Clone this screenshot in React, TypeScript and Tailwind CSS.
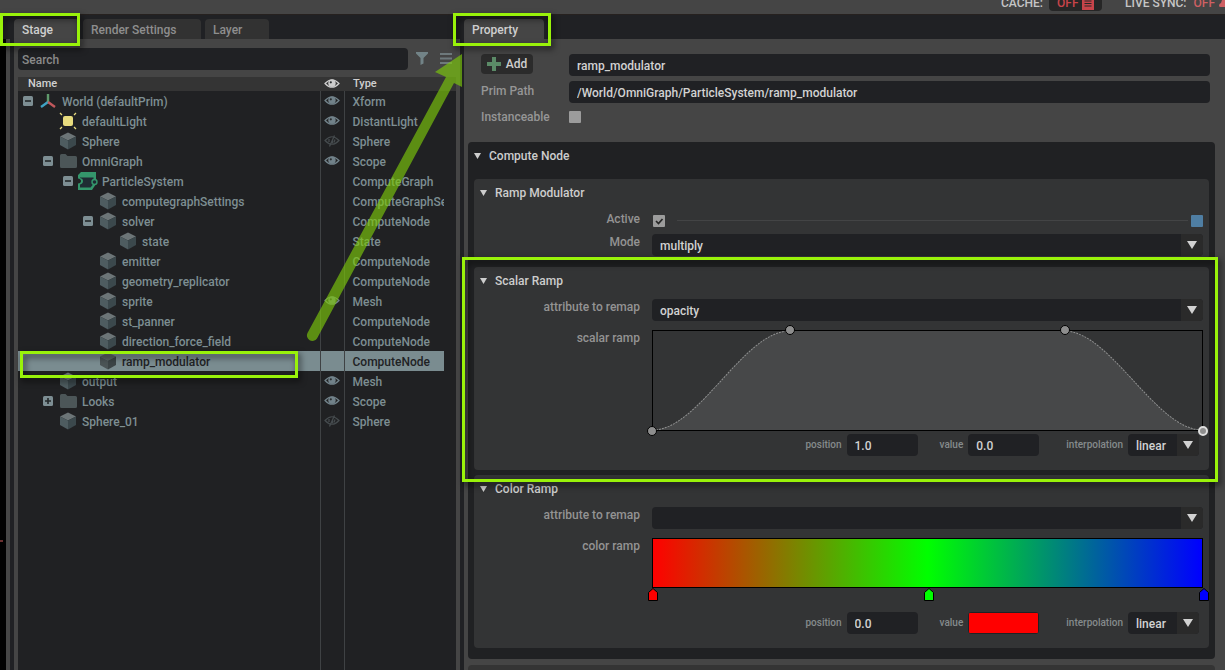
import React from 'react';

type IconKind = 'axes' | 'light' | 'cube' | 'folder' | 'graph';

interface Prim {
  name: string;
  type: string;
  depth: number;
  icon: IconKind;
  toggle?: 'open' | 'closed';
  eye?: 'on' | 'off';
  selected?: boolean;
}

const prims: Prim[] = [
  { name: 'World (defaultPrim)', type: 'Xform', depth: 0, icon: 'axes', toggle: 'open', eye: 'on' },
  { name: 'defaultLight', type: 'DistantLight', depth: 1, icon: 'light', eye: 'on' },
  { name: 'Sphere', type: 'Sphere', depth: 1, icon: 'cube', eye: 'off' },
  { name: 'OmniGraph', type: 'Scope', depth: 1, icon: 'folder', toggle: 'open', eye: 'on' },
  { name: 'ParticleSystem', type: 'ComputeGraph', depth: 2, icon: 'graph', toggle: 'open' },
  { name: 'computegraphSettings', type: 'ComputeGraphSettings', depth: 3, icon: 'cube' },
  { name: 'solver', type: 'ComputeNode', depth: 3, icon: 'cube', toggle: 'open' },
  { name: 'state', type: 'State', depth: 4, icon: 'cube' },
  { name: 'emitter', type: 'ComputeNode', depth: 3, icon: 'cube' },
  { name: 'geometry_replicator', type: 'ComputeNode', depth: 3, icon: 'cube' },
  { name: 'sprite', type: 'Mesh', depth: 3, icon: 'cube', eye: 'on' },
  { name: 'st_panner', type: 'ComputeNode', depth: 3, icon: 'cube' },
  { name: 'direction_force_field', type: 'ComputeNode', depth: 3, icon: 'cube' },
  { name: 'ramp_modulator', type: 'ComputeNode', depth: 3, icon: 'cube', selected: true },
  { name: 'output', type: 'Mesh', depth: 1, icon: 'cube', eye: 'on' },
  { name: 'Looks', type: 'Scope', depth: 1, icon: 'folder', toggle: 'closed', eye: 'on' },
  { name: 'Sphere_01', type: 'Sphere', depth: 1, icon: 'cube', eye: 'off' },
];

const PrimIcon = ({ kind, dim }: { kind: IconKind; dim?: boolean }) => {
  switch (kind) {
    case 'axes':
      return (
        <svg viewBox="0 0 18 18" className="w-[18px] h-[18px]" fill="none" strokeWidth="2.4">
          <path d="M9 10V2" stroke="#5f9a6b" />
          <path d="M9 10l-7 5" stroke="#3fa3c4" />
          <path d="M9 10l7 5" stroke="#c0585c" />
        </svg>
      );
    case 'light':
      return (
        <svg viewBox="0 0 18 18" className="w-[18px] h-[18px]">
          <rect x="4" y="4" width="10" height="10" rx="2" fill="#e8dc7e" />
          <path d="M1 1l2 2M17 1l-2 2M1 17l2-2M17 17l-2-2" stroke="#e8dc7e" strokeWidth="1.3" />
        </svg>
      );
    case 'folder':
      return (
        <svg viewBox="0 0 18 18" className="w-[18px] h-[18px]">
          <path d="M1 3.5Q1 2 2.500 2h4l2 2h8q1.500 0 1.500 1.500v9q0 1.500-1.500 1.500h-14Q1 16 1 14.500z" fill="#4c5658" />
        </svg>
      );
    case 'graph':
      return (
        <svg viewBox="0 0 20 18" className="-ml-px w-5 h-[18px]">
          <path d="M3 0H18V12L14 18H0V11.500Q3 11 3 9Q3 7 0 6.500V3z" fill="#34966b" />
          <path d="M2 5.500H15.500V12L12.500 15.500H2V12.500Q5 11.500 5 9Q5 6.500 2 6z" fill="#1f2b33" />
          <circle cx="16.500" cy="10" r="2.500" fill="#1f2b33" stroke="#34966b" strokeWidth="1.400" />
        </svg>
      );
    default:
      return (
        <svg viewBox="0 0 18 18" className="w-[18px] h-[18px]">
          <path d="M9 0.500L17 4.500L9 8.500L1 4.500z" fill={dim ? '#5b6364' : '#6c7577'} />
          <path d="M1 4.500L9 8.500V17.500L1 13z" fill={dim ? '#4b5456' : '#4e5c60'} />
          <path d="M17 4.500L9 8.500V17.500L17 13z" fill={dim ? '#3c4446' : '#3b484c'} />
        </svg>
      );
  }
};

const Eye = ({ off, bright }: { off?: boolean; bright?: boolean }) => {
  const color = bright ? '#cdcdcd' : off ? '#454b4e' : '#71828a';
  return (
    <svg viewBox="0 0 16 12" className="w-4 h-3 mx-auto" fill="none" stroke={color}>
      <path d="M1 5.500Q8-2 15 5.500Q8 13 1 5.500z" strokeWidth="1.200" />
      {off ? (
        <path d="M10.500 0.500L5.500 11.500M8.500 4.500v4M5 4v3M11 4.500l-1 3" strokeWidth="1.300" />
      ) : (
        <>
          <circle cx="8" cy="5.300" r="3.700" fill={color} stroke="none" />
          <circle cx="6.800" cy="4.300" r="1.100" fill="#2a2e30" stroke="none" />
        </>
      )}
    </svg>
  );
};

const Toggle = ({ state }: { state: 'open' | 'closed' }) => (
  <button aria-label={state === 'open' ? 'Collapse' : 'Expand'} className="block w-[10px] h-[10px]">
    <svg viewBox="0 0 10 10" className="block w-[10px] h-[10px]">
      <rect width="10" height="10" rx="1.500" fill="#7d8e93" />
      <path d={state === 'open' ? 'M2 5h6' : 'M2 5h6M5 2v6'} stroke="#23282a" strokeWidth="1.600" />
    </svg>
  </button>
);

// Green frame used to call out a part of the interface
const Callout = ({ className }: { className: string }) => (
  <div
    aria-hidden
    className={`absolute z-10 pointer-events-none border-3 border-[#99f20a] drop-shadow-[2px_3px_3px_rgba(0,0,0,0.7)] ${className}`}
  />
);

const Tab = ({ label, active, className }: { label: string; active?: boolean; className: string }) => (
  <button
    role="tab"
    aria-selected={!!active}
    className={`h-5 pl-2 pt-0.5 text-left rounded-t ${active ? 'bg-[#454545] text-[#cfcfcf]' : 'bg-[#323232] text-[#8e8e8e]'} ${className}`}
  >
    {label}
  </button>
);

const TopBar = () => (
  <header className="h-[14px] shrink-0 bg-[#454545] overflow-hidden flex justify-end items-end pb-[3px] text-[#c6c6c6]">
    <span className="leading-4">CACHE:</span>
    <button className="ml-1.5 h-4 w-[53px] px-2 rounded-b-sm bg-[#262626] text-[#c8444a] flex items-center justify-between">
      OFF
      <svg viewBox="0 0 12 12" className="w-3 h-4">
        <path d="M0 0h8l4 3v10H0z" fill="#c8444a" />
        <path d="M2.500 4h7M2.500 6.500h7M2.500 9h7" stroke="#262626" />
      </svg>
    </button>
    <span className="ml-[23px] leading-4">LIVE SYNC:</span>
    <button className="ml-[7px] -mr-1.5 h-4 text-[#cf6063] flex items-center gap-1">
      OFF
      <svg viewBox="0 0 12 12" className="w-3 h-3">
        <path d="M4 0h8v10H1.500Q0 10 0 8.500Q0 6.500 2 6z" fill="#cf6063" />
      </svg>
    </button>
  </header>
);

const StagePanel = () => (
  <section className="w-[446px] shrink-0 flex flex-col">
    <div role="tablist" className="relative h-6 shrink-0 flex items-end gap-1">
      <Tab label="Stage" active className="w-[65px]" />
      <Tab label="Render Settings" className="w-[118px]" />
      <Tab label="Layer" className="w-16" />
      <Callout className="-left-[14px] -top-0.5 w-20 h-[33px]" />
    </div>
    <div className="flex-1 bg-[#454545] px-1 pt-[9px] flex flex-col">
      <div className="flex items-start">
        <input
          type="text"
          placeholder="Search"
          aria-label="Search"
          className="flex-1 h-[22px] px-1 pt-0.5 rounded-sm bg-[#202124] placeholder:text-[#8a8a8a] text-[#cfcfcf] outline-none"
        />
        <button aria-label="Filter" className="ml-2 mt-1">
          <svg viewBox="0 0 12 13" className="block w-3 h-[13px]">
            <path d="M0 0h12v1.500L7.500 6v5.500L4.500 13V6L0 1.500z" fill="#728387" />
          </svg>
        </button>
        <button aria-label="Options" className="ml-3 mr-1 mt-1">
          <svg viewBox="0 0 12 13" className="block w-3 h-[13px]">
            <path d="M0 2h12M0 6.500h12M0 11h12" stroke="#6e797c" strokeWidth="2" />
          </svg>
        </button>
      </div>
      <div className="mt-[7px] flex-1 flex flex-col bg-[#202123]">
        <table className="w-full table-fixed border-collapse">
          <colgroup>
            <col />
            <col className="w-6" />
            <col className="w-[100px]" />
            <col className="w-3" />
          </colgroup>
          <thead className="bg-[#343434] text-[11px] text-[#d0d0d0]">
            <tr className="h-[14px] leading-[14px]">
              <th className="pl-[10px] text-left font-medium">Name</th>
              <th aria-label="Visibility"><Eye bright /></th>
              <th className="pl-[9px] text-left font-medium">Type</th>
              <th />
            </tr>
          </thead>
          <tbody>
            {prims.map((prim) => (
              <tr key={prim.name} className="h-5">
                <td className={`relative p-0 ${prim.selected ? 'bg-[#7a8c90] text-[#1f2224]' : 'text-[#7d8e92]'}`}>
                  <div className="flex items-center" style={{ paddingLeft: 5 + prim.depth * 20 }}>
                    <span className="w-[10px]">{prim.toggle && <Toggle state={prim.toggle} />}</span>
                    <span className="ml-1.5 w-[23px]"><PrimIcon kind={prim.icon} dim={prim.selected} /></span>
                    <span className="pt-0.5 leading-[18px]">{prim.name}</span>
                  </div>
                  {prim.selected && <Callout className="left-0.5 top-0 w-[278px] h-[27px]" />}
                </td>
                <td className={`p-0 border-x border-[#3f4244] ${prim.selected ? 'bg-[#7a8c90]' : ''}`}>
                  {prim.eye && <Eye off={prim.eye === 'off'} />}
                </td>
                <td
                  className={`p-0 pl-2 pt-0.5 leading-[18px] overflow-hidden whitespace-nowrap ${
                    prim.selected ? 'bg-[#7a8c90] text-[#1f2224]' : 'text-[#7d8e92]'
                  }`}
                >
                  {prim.type}
                </td>
                <td />
              </tr>
            ))}
          </tbody>
        </table>
        {/* Column rules run on below the last prim */}
        <div className="flex-1 flex justify-end">
          <div className="w-[25px] mr-[111px] border-x border-[#3f4244]" />
        </div>
      </div>
    </div>
  </section>
);

const Triangle = ({ className }: { className: string }) => (
  <svg viewBox="0 0 10 8" preserveAspectRatio="none" className={className}>
    <path d="M0 0h10L5 8z" fill="currentColor" />
  </svg>
);

const Dropdown = ({ id, options, className }: { id: string; options: string[]; className: string }) => (
  <div className={`relative h-[22px] ${className}`}>
    <select id={id} className="block w-full h-full pl-2 pr-6 pt-0.5 rounded-sm appearance-none bg-[#202124] text-[#d2d2d2] outline-none">
      {options.map((option) => (
        <option key={option}>{option}</option>
      ))}
    </select>
    <span className="absolute right-0 top-0 w-[22px] h-full rounded-r-sm bg-[#2a2a2a] text-[#d2d2d2] flex items-center justify-center pointer-events-none">
      <Triangle className="w-[10px] h-2" />
    </span>
  </div>
);

const Row = ({ label, id, children }: { label: string; id?: string; children: React.ReactNode }) => (
  <div className="flex items-start">
    <label htmlFor={id} className="w-[166px] shrink-0 mr-3 leading-4 text-right text-[#939393]">
      {label}
    </label>
    <div className="flex-1 min-w-0">{children}</div>
  </div>
);

const Card = ({ title, className, children }: { title: string; className: string; children: React.ReactNode }) => (
  <section className={`relative rounded-sm bg-[#333435] pr-1.5 ${className}`}>
    <h3 className="h-7 pl-1.5 flex items-center gap-2 text-[#cdcdcd]">
      <Triangle className="w-[7px] h-1.5" />
      {title}
    </h3>
    {children}
  </section>
);

const KeyEditor = ({ prefix, position, children }: { prefix: string; position: string; children: React.ReactNode }) => (
  <div className="flex items-center justify-end pr-1 text-[10px] text-[#858b8c]">
    <label htmlFor={`${prefix}-position`}>position</label>
    <input
      id={`${prefix}-position`}
      defaultValue={position}
      className="ml-[5px] w-[71px] h-[22px] px-2 pt-0.5 rounded-sm bg-[#202124] text-xs text-[#d2d2d2] outline-none"
    />
    <label htmlFor={`${prefix}-value`} className="ml-[22px]">value</label>
    {children}
    <label htmlFor={`${prefix}-interp`} className="ml-[27px]">interpolation</label>
    <Dropdown id={`${prefix}-interp`} options={['linear']} className="ml-[5px] w-[71px] text-xs" />
  </div>
);

const curveKeys = [
  { x: 0, y: 100 },
  { x: 25, y: 0 },
  { x: 75, y: 0 },
  { x: 100, y: 100, active: true },
];

const ScalarCurve = () => (
  <div className="relative h-[101px]">
    <svg viewBox="0 0 551 100" preserveAspectRatio="none" className="block w-full h-full border border-black">
      <path d="M0 100C46 100 91 0 137 0H413C459 0 505 100 551 100z" fill="#474849" />
      <path
        d="M0 100C46 100 91 0 137 0M413 0C459 0 505 100 551 100"
        fill="none"
        stroke="#8f9090"
        strokeDasharray="2 1"
        vectorEffect="non-scaling-stroke"
      />
    </svg>
    {curveKeys.map((key) => (
      <span
        key={key.x}
        className={`absolute w-[10px] h-[10px] -ml-[5px] -mt-[5px] rounded-full bg-[#8e8e8e] ${
          key.active ? 'border-2 border-[#dedede]' : 'border border-black'
        }`}
        style={{ left: `${key.x}%`, top: `${key.y}%` }}
      />
    ))}
  </div>
);

const colorKeys = [
  { at: 0, color: '#ff0000' },
  { at: 50, color: '#00ff00' },
  { at: 100, color: '#0000ff' },
];

const ColorGradient = () => (
  <div>
    <div className="h-[50px] border border-black bg-[linear-gradient(to_right,#ff0000,#00ff00,#0000ff)]" />
    <div className="relative h-6">
      {colorKeys.map((key) => (
        <svg
          key={key.at}
          viewBox="0 0 10 13"
          className="absolute top-0 w-[10px] h-[13px] -ml-1"
          style={{ left: `${key.at}%` }}
        >
          <path d="M.5 4.500L5 .5L9.500 4.500V12.500H.5z" fill={key.color} stroke="#000" />
        </svg>
      ))}
    </div>
  </div>
);

const PropertyPanel = () => (
  <section className="flex-1 min-w-0 flex flex-col">
    <div role="tablist" className="relative h-6 shrink-0 flex items-end">
      <Tab label="Property" active className="w-20" />
      <Callout className="-left-[11px] -top-0.5 w-[98px] h-[33px]" />
    </div>
    <div className="flex-1 bg-[#454545] pt-[15px]">
      <div className="pl-[17px] pr-[15px] text-[#969696]">
        <div className="flex items-start">
          <div className="w-22 shrink-0">
            <button className="w-[52px] h-5 rounded-sm bg-[#2b2b2b] text-[#cfcfcf] flex items-center justify-center gap-[5px]">
              <svg viewBox="0 0 14 14" className="w-[14px] h-[14px]">
                <path d="M5 0h4v5h5v4H9v5H5V9H0V5h5z" fill="#5b8a67" />
              </svg>
              Add
            </button>
          </div>
          <input
            aria-label="Prim name"
            defaultValue="ramp_modulator"
            className="flex-1 h-[22px] px-2 pt-0.5 rounded-sm bg-[#202124] text-[#d2d2d2] outline-none"
          />
        </div>
        <div className="mt-[5px] flex items-start">
          <label htmlFor="prim-path" className="w-22 shrink-0 leading-5">Prim Path</label>
          <input
            id="prim-path"
            defaultValue="/World/OmniGraph/ParticleSystem/ramp_modulator"
            className="flex-1 h-[22px] px-2 pt-0.5 rounded-sm bg-[#202124] text-[#d2d2d2] outline-none"
          />
        </div>
        <div className="mt-1 flex items-center">
          <label htmlFor="instanceable" className="w-22 shrink-0 leading-5">Instanceable</label>
          <input id="instanceable" type="checkbox" className="w-3 h-3 rounded-[1px] appearance-none bg-[#9c9c9c]" />
        </div>
      </div>

      <section className="mt-[15px] ml-1 mr-[10px] px-1.5 pb-[11px] rounded-sm bg-[#202123]">
        <h2 className="h-[37px] pb-[9px] flex items-center gap-2 text-[#cdcdcd]">
          <Triangle className="w-[7px] h-1.5" />
          Compute Node
        </h2>

        <Card title="Ramp Modulator" className="pb-[3px]">
          <div className="pt-1">
            <Row label="Active" id="active">
              <div className="h-[23px] flex items-center pb-1">
                <span className="relative ml-px w-3 h-3">
                  <input id="active" type="checkbox" defaultChecked className="block w-3 h-3 rounded-[1px] appearance-none bg-[#9c9c9c]" />
                  <svg viewBox="0 0 12 12" className="absolute inset-0 w-3 h-3 pointer-events-none">
                    <path d="M3 6l2.500 2.500L9.500 4" fill="none" stroke="#262626" strokeWidth="1.700" />
                  </svg>
                </span>
                <span className="ml-3 mr-[3px] flex-1 h-px bg-[#434445]" />
                <button aria-label="Reset to default" className="w-3 h-3 rounded-[1px] bg-[#4f7ea3]" />
              </div>
            </Row>
            <Row label="Mode" id="mode">
              <Dropdown id="mode" options={['multiply']} className="w-full" />
            </Row>
          </div>
        </Card>

        <Card title="Scalar Ramp" className="mt-2 pb-[14px]">
          <div className="pt-1">
            <Row label="attribute to remap" id="scalar-attr">
              <Dropdown id="scalar-attr" options={['opacity']} className="w-full" />
            </Row>
            <div className="mt-[9px]">
              <Row label="scalar ramp">
                <ScalarCurve />
              </Row>
            </div>
            <div className="mt-[3px]">
              <KeyEditor prefix="scalar" position="1.0">
                <input
                  id="scalar-value"
                  defaultValue="0.0"
                  className="ml-[5px] w-[71px] h-[22px] px-2 pt-0.5 rounded-sm bg-[#202124] text-xs text-[#d2d2d2] outline-none"
                />
              </KeyEditor>
            </div>
          </div>
          <Callout className="-left-3 -right-[9px] -top-[10px] -bottom-3" />
        </Card>

        <Card title="Color Ramp" className="mt-[5px] pb-[14px]">
          <div className="pt-1">
            <Row label="attribute to remap" id="color-attr">
              <Dropdown id="color-attr" options={['']} className="w-full" />
            </Row>
            <div className="mt-[9px]">
              <Row label="color ramp">
                <ColorGradient />
              </Row>
            </div>
            <KeyEditor prefix="color" position="0.0">
              <input
                id="color-value"
                type="color"
                defaultValue="#ff0000"
                className="ml-[5px] w-[71px] h-[22px] p-px rounded-sm appearance-none bg-[#202124] [&::-webkit-color-swatch-wrapper]:p-0 [&::-webkit-color-swatch]:border-0 [&::-webkit-color-swatch]:rounded-[1px]"
              />
            </KeyEditor>
          </div>
        </Card>
      </section>
      <div className="mt-1.5 ml-1 mr-[10px] h-7 rounded-sm bg-[#343434]" />
    </div>
  </section>
);

const App = () => {
  return (
    <div className="relative h-screen overflow-hidden flex flex-col bg-[#202124] font-['Roboto',sans-serif] font-medium text-xs">
      <TopBar />
      <main className="flex-1 min-h-0 flex border-t border-[#26211f]">
        {/* Edge of the viewport and the splitter */}
        <div className="w-[14px] shrink-0 pt-6 flex">
          <div className="w-1.5 bg-black flex flex-col justify-end pb-32">
            <div className="w-[3px] h-0.5 bg-[#6b3030]" />
          </div>
          <div className="w-1 bg-[#454545]" />
        </div>
        <StagePanel />
        <div className="w-1 shrink-0" />
        <PropertyPanel />
      </main>

      {/* Arrow leading from the selected prim to the Property tab */}
      <svg viewBox="0 0 160 300" className="absolute left-[304px] top-[50px] w-40 h-[300px] z-20 pointer-events-none">
        <path
          d="M158 4V37L150 33L13 288.500A5.500 5.500 0 0 1 3.500 283L142 27L131 22z"
          fill="#7dca0a"
          fillOpacity="0.65"
        />
      </svg>
    </div>
  );
};

export default App;
